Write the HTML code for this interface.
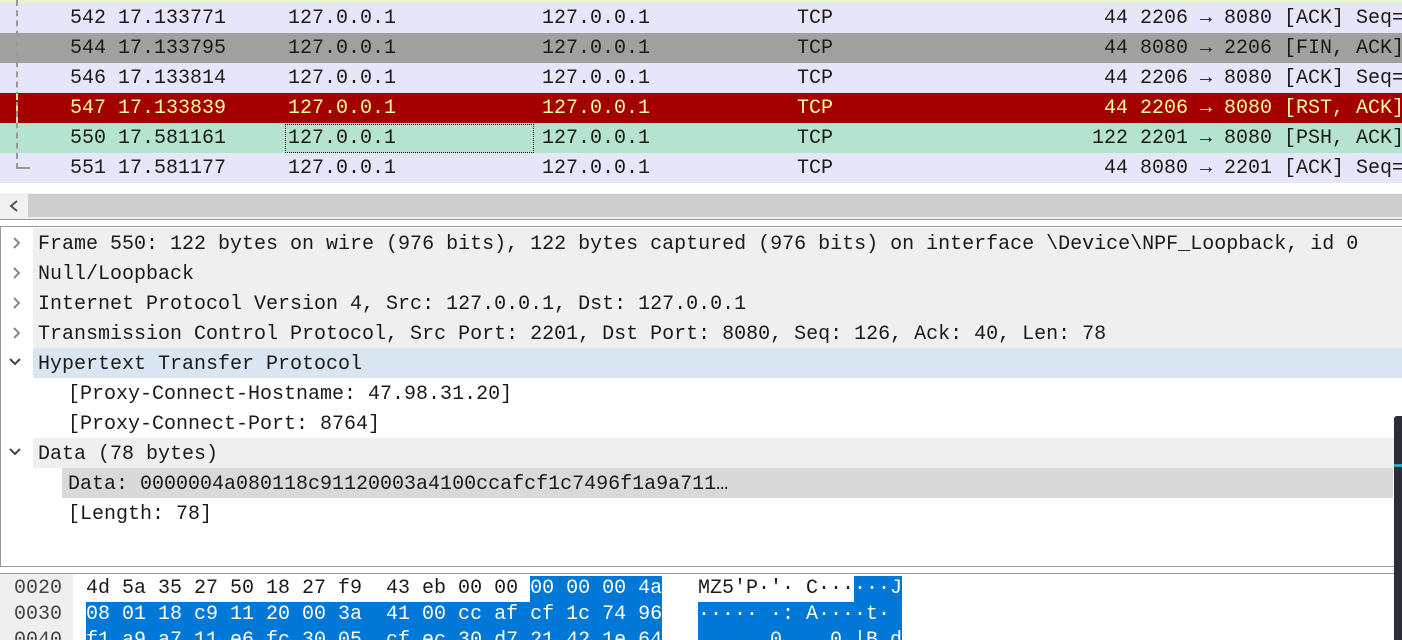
<!DOCTYPE html>
<html><head><style>
html,body{margin:0;width:1402px;height:640px;overflow:hidden}
body{background:#fff;font-family:"Liberation Mono",monospace;font-size:20px;color:#1a1a1a;position:relative}
.a{position:absolute;white-space:pre;line-height:30px}
.r{position:absolute;left:0;width:1402px;height:30px}
.r span{position:absolute;white-space:pre;line-height:30px;top:1px}
.h{position:absolute;white-space:pre;line-height:26px}
svg{position:absolute}
</style></head><body>
<div style="position:absolute;left:0;top:0;width:1402px;height:3px;background:#e4f5c8"></div>
<div class="r" style="top:3px;background:#e6e6fa"><span style="left:70px">542</span><span style="left:118px">17.133771</span><span style="left:288px">127.0.0.1</span><span style="left:542px">127.0.0.1</span><span style="left:797px">TCP</span><span style="left:1104px">44 2206 → 8080 [ACK] Seq=</span></div>
<div class="r" style="top:33px;background:#a0a0a0"><span style="left:70px">544</span><span style="left:118px">17.133795</span><span style="left:288px">127.0.0.1</span><span style="left:542px">127.0.0.1</span><span style="left:797px">TCP</span><span style="left:1104px">44 8080 → 2206 [FIN, ACK]</span></div>
<div class="r" style="top:63px;background:#e6e6fa"><span style="left:70px">546</span><span style="left:118px">17.133814</span><span style="left:288px">127.0.0.1</span><span style="left:542px">127.0.0.1</span><span style="left:797px">TCP</span><span style="left:1104px">44 2206 → 8080 [ACK] Seq=</span></div>
<div class="r" style="top:93px;background:#a40000;color:#fffc9c"><span style="left:70px">547</span><span style="left:118px">17.133839</span><span style="left:288px">127.0.0.1</span><span style="left:542px">127.0.0.1</span><span style="left:797px">TCP</span><span style="left:1104px">44 2206 → 8080 [RST, ACK]</span></div>
<div class="r" style="top:123px;background:#b4e4d0"><span style="left:70px">550</span><span style="left:118px">17.581161</span><span style="left:285px;top:1px;width:249px;height:29px;border:1px dotted #000;box-sizing:border-box"></span><span style="left:288px">127.0.0.1</span><span style="left:542px">127.0.0.1</span><span style="left:797px">TCP</span><span style="left:1092px">122 2201 → 8080 [PSH, ACK]</span></div>
<div class="r" style="top:153px;background:#e6e6fa"><span style="left:70px">551</span><span style="left:118px">17.581177</span><span style="left:288px">127.0.0.1</span><span style="left:542px">127.0.0.1</span><span style="left:797px">TCP</span><span style="left:1104px">44 8080 → 2201 [ACK] Seq=</span></div>
<div style="position:absolute;left:16px;top:0;height:169px;border-left:2px dashed #999"></div>
<div style="position:absolute;left:16px;top:167px;width:14px;height:2px;background:#999"></div>
<div style="position:absolute;left:16px;top:94px;height:29px;border-left:2px dashed #f0e0a0"></div>
<div style="position:absolute;left:0;top:193px;width:1402px;height:26px;background:#f0f0f0"></div>
<div style="position:absolute;left:28px;top:194px;width:1374px;height:23px;background:#cdcdcd"></div>
<svg style="left:8px;top:199px" width="12" height="14"><path d="M9 2L3 7L9 12" stroke="#555" stroke-width="2" fill="none"/></svg>
<div style="position:absolute;left:0;top:219px;width:1402px;height:1px;background:#999"></div>
<div style="position:absolute;left:0;top:226px;width:1402px;height:1px;background:#999"></div>
<div style="position:absolute;left:0;top:227px;width:1px;height:340px;background:#999"></div>
<div style="position:absolute;left:33px;top:228px;width:1369px;height:120px;background:#efefef"></div>
<div style="position:absolute;left:33px;top:348px;width:1369px;height:30px;background:#d9e5f0"></div>
<div style="position:absolute;left:33px;top:438px;width:1369px;height:30px;background:#efefef"></div>
<div style="position:absolute;left:62px;top:468px;width:1331px;height:30px;background:#d9d9d9"></div>
<svg style="left:10px;top:236px" width="14" height="110"><g stroke="#888" stroke-width="2" fill="none"><path d="M4 2L9 7L4 12"/><path d="M4 32L9 37L4 42"/><path d="M4 62L9 67L4 72"/><path d="M4 92L9 97L4 102"/></g></svg>
<svg style="left:8px;top:356px" width="16" height="12"><path d="M2 3L7 8L12 3" stroke="#444" stroke-width="2" fill="none"/></svg>
<svg style="left:8px;top:446px" width="16" height="12"><path d="M2 3L7 8L12 3" stroke="#444" stroke-width="2" fill="none"/></svg>
<div class="a" style="left:38px;top:230px">Frame 550: 122 bytes on wire (976 bits), 122 bytes captured (976 bits) on interface \Device\NPF_Loopback, id 0
Null/Loopback
Internet Protocol Version 4, Src: 127.0.0.1, Dst: 127.0.0.1
Transmission Control Protocol, Src Port: 2201, Dst Port: 8080, Seq: 126, Ack: 40, Len: 78
Hypertext Transfer Protocol</div>
<div class="a" style="left:68px;top:380px">[Proxy-Connect-Hostname: 47.98.31.20]
[Proxy-Connect-Port: 8764]</div>
<div class="a" style="left:38px;top:440px">Data (78 bytes)</div>
<div class="a" style="left:68px;top:470px">Data: 0000004a080118c91120003a4100ccafcf1c7496f1a9a711…
[Length: 78]</div>
<div style="position:absolute;left:0;top:566px;width:1402px;height:1px;background:#999"></div>
<div style="position:absolute;left:0;top:573px;width:1402px;height:1px;background:#999"></div>
<div style="position:absolute;left:0;top:574px;width:73px;height:66px;background:#efefef"></div>
<div style="position:absolute;left:530px;top:576px;width:132px;height:26px;background:#0078d7"></div>
<div style="position:absolute;left:854px;top:576px;width:48px;height:26px;background:#0078d7"></div>
<div style="position:absolute;left:86px;top:602px;width:576px;height:38px;background:#0078d7"></div>
<div style="position:absolute;left:698px;top:602px;width:204px;height:38px;background:#0078d7"></div>
<div class="h" style="left:14px;top:576px;color:#444">0020
0030
0040</div>
<div class="h" style="left:86px;top:576px">4d 5a 35 27 50 18 27 f9  43 eb 00 00 <span style="color:#fff">00 00 00 4a</span></div>
<div class="h" style="left:86px;top:602px;color:#fff">08 01 18 c9 11 20 00 3a  41 00 cc af cf 1c 74 96
f1 a9 a7 11 e6 fc 30 05  cf ec 30 d7 21 42 1e 64</div>
<div class="h" style="left:698px;top:576px">MZ5'P·'· C···<span style="color:#fff">···J</span></div>
<div class="h" style="left:698px;top:602px;color:#fff">····· ·: A····t·
      0    0 |B d</div>
<div style="position:absolute;left:1394px;top:416px;width:8px;height:224px;background:#2b2d3c;border-radius:3px 0 0 0"></div>
<div style="position:absolute;left:1394px;top:464px;width:8px;height:3px;background:#2aa8c8"></div>
</body></html>
